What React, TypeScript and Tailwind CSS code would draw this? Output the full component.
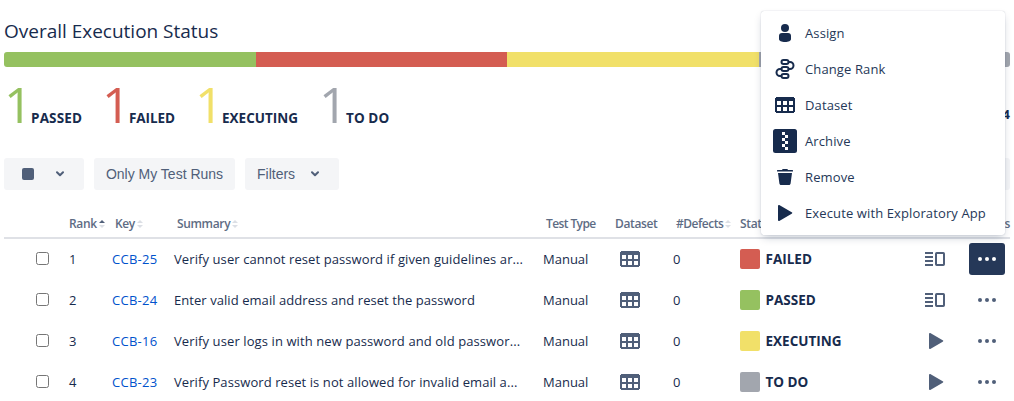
import React from 'react';

type Status = 'FAILED' | 'PASSED' | 'EXECUTING' | 'TO DO';

const fill: Record<Status, string> = {
  PASSED: 'bg-[#95c160]',
  FAILED: 'bg-[#d45d52]',
  EXECUTING: 'bg-[#f1e069]',
  'TO DO': 'bg-[#a2a6ae]',
};

const GRID = 'grid grid-cols-[65px_43px_62px_369px_73px_57px_67px_185px_44px_41px]';

const DatasetIcon = () => (
  <svg width="20" height="16" viewBox="0 0 20 16" shapeRendering="crispEdges">
    <path
      fill="currentColor"
      fillRule="evenodd"
      d="M1 0h18v1h1v14h-1v1H1v-1H0V1h1zM2 4v4h4V4zm6 0v4h4V4zm6 0v4h4V4zM2 10v4h4v-4zm6 0v4h4v-4zm6 0v4h4v-4z"
    />
  </svg>
);

const PlayIcon = () => (
  <svg width="15" height="16" viewBox="0 0 15 16">
    <path fill="currentColor" d="M0 1.3C0 .2.8-.2 1.7.3l12 7c.8.4.8 1 0 1.4l-12 7C.8 16.200 0 15.800 0 14.700z" />
  </svg>
);

const DetailIcon = () => (
  <svg width="20" height="14" viewBox="0 0 20 14">
    <path fill="currentColor" d="M0 0h8v2H0zM0 4h8v2H0zM0 8h8v2H0zM0 12h8v2H0z" />
    <rect x="11" y="1" width="8" height="12" rx=".7" fill="none" stroke="currentColor" strokeWidth="2" />
  </svg>
);

const PersonIcon = () => (
  <svg width="12" height="18" viewBox="0 0 12 18" fill="currentColor">
    <circle cx="6" cy="4" r="4" />
    <path d="M0 12a3 3 0 0 1 3-3h6a3 3 0 0 1 3 3v3c0 2-2.500 3-6 3s-6-1-6-3z" />
  </svg>
);

const RankIcon = () => (
  <svg width="20" height="20" viewBox="0 0 20 20" fill="none" stroke="currentColor" strokeWidth="2">
    <rect x="6.500" y="1" width="7" height="4" rx="2" />
    <rect x="6.500" y="8" width="7" height="4" rx="2" />
    <rect x="6.500" y="15" width="7" height="4" rx="2" />
    <path d="M13.500 3H15a3.500 3.500 0 0 1 0 7h-1.500M6.500 10H5a3.500 3.500 0 0 0 0 7h1.500" />
  </svg>
);

const ArchiveIcon = () => (
  <svg width="24" height="24" viewBox="0 0 24 24">
    <rect width="24" height="24" rx="2.500" fill="currentColor" />
    <path fill="#fff" d="M9 3h3v3H9zM12 6h3v3h-3zM9 9h3v3H9zM12 12h3v3h-3zM9 15h3v3H9zM12 18h3v3h-3z" />
  </svg>
);

const TrashIcon = () => (
  <svg width="16" height="16" viewBox="0 0 16 16" fill="currentColor">
    <path d="M0 2.500V1.600c0-.4.200-.6.600-.6H5c.2-.6.500-1 1-1h4c.5 0 .8.400 1 1h4.400c.4 0 .6.200.6.600v.9zM1 4h14l-1.400 10.500c-.1.900-.8 1.500-1.600 1.500H4c-.8 0-1.500-.6-1.600-1.500z" />
  </svg>
);

const Chevron = () => (
  <svg width="8" height="6" viewBox="0 0 8 6" fill="none" stroke="currentColor" strokeWidth="2" strokeLinecap="round" strokeLinejoin="round">
    <path d="M1 1.200l3 3 3-3" />
  </svg>
);

const Sort = ({ active = false }: { active?: boolean }) => (
  <svg width="6" height="8" viewBox="0 0 6 8" className="ml-0.5">
    <path d="M0 3l3-3 3 3z" fill={active ? '#505f79' : '#dcdfe5'} />
    <path d="M0 5l3 3 3-3z" fill="#dcdfe5" />
  </svg>
);

const Dots = () => (
  <svg width="18" height="4" viewBox="0 0 18 4" fill="currentColor">
    <circle cx="2" cy="2" r="2" />
    <circle cx="9" cy="2" r="2" />
    <circle cx="16" cy="2" r="2" />
  </svg>
);

const counts: { label: Status; color: string; width: string; spacing: string }[] = [
  { label: 'PASSED', color: 'text-[#95c160]', width: 'w-[98px]', spacing: 'tracking-[0.15px]' },
  { label: 'FAILED', color: 'text-[#d45d52]', width: 'w-[93px]', spacing: 'tracking-[-0.1px]' },
  { label: 'EXECUTING', color: 'text-[#f1e069]', width: 'w-[124px]', spacing: 'tracking-[0.02px]' },
  { label: 'TO DO', color: 'text-[#a2a6ae]', width: 'w-[100px]', spacing: 'tracking-[0.1px]' },
];

const rows: { key: string; summary: string; status: Status; done: boolean; spacing: string }[] = [
  { key: 'CCB-25', summary: 'Verify user cannot reset password if given guidelines ar...', status: 'FAILED', done: true, spacing: 'tracking-[0.09px]' },
  { key: 'CCB-24', summary: 'Enter valid email address and reset the password', status: 'PASSED', done: true, spacing: 'tracking-[0.06px]' },
  { key: 'CCB-16', summary: 'Verify user logs in with new password and old passwor...', status: 'EXECUTING', done: false, spacing: 'tracking-[0.1px]' },
  { key: 'CCB-23', summary: 'Verify Password reset is not allowed for invalid email a...', status: 'TO DO', done: false, spacing: 'tracking-[0.08px]' },
];

const menu: { label: string; icon: React.ReactNode }[] = [
  { label: 'Assign', icon: <PersonIcon /> },
  { label: 'Change Rank', icon: <RankIcon /> },
  { label: 'Dataset', icon: <DatasetIcon /> },
  { label: 'Archive', icon: <ArchiveIcon /> },
  { label: 'Remove', icon: <TrashIcon /> },
  { label: 'Execute with Exploratory App', icon: <PlayIcon /> },
];

export default function App() {
  return (
    <div className="relative h-[401px] w-[1014px] overflow-hidden bg-white px-1 font-['Open_Sans',sans-serif] text-[13px] text-[#172b4d]">
      <h1 className="flex h-[52px] items-center pt-[11px] text-[19px] font-medium tracking-[-0.01px] whitespace-nowrap">
        Overall Execution Status
      </h1>
      <div className="flex h-[15px] w-[1006px] overflow-hidden rounded-[3px]">
        <div className="w-[252px] bg-[#95c160]" />
        <div className="w-[251px] bg-[#d45d52]" />
        <div className="w-[252px] bg-[#f1e069]" />
        <div className="flex-1 bg-[#a2a6ae]" />
      </div>

      <div className="flex h-[91px] items-start pt-[9px] whitespace-nowrap">
        {counts.map((c) => (
          <div key={c.label} className={`flex items-baseline leading-[56px] ${c.width}`}>
            <span className={`w-[27px] text-[50px] font-normal ${c.color}`}>1</span>
            <span className={`text-[13.5px] font-bold ${c.spacing}`}>{c.label}</span>
          </div>
        ))}
        <span className="ml-auto pt-[29px] text-[13px] leading-[18px] font-bold">4</span>
      </div>

      <div className="flex h-8 gap-2.5 font-['Liberation_Sans',sans-serif] text-[14px] text-[#505f79]">
        <button className="flex w-20 items-center rounded-[3px] bg-[#f4f5f7] pl-[18px]">
          <span className="h-3 w-3 rounded-[2px] bg-[#505f79]" />
          <span className="ml-[22px]"><Chevron /></span>
        </button>
        <button className="w-[141px] rounded-[3px] bg-[#f4f5f7] whitespace-nowrap">Only My Test Runs</button>
        <button className="flex w-[94px] items-center rounded-[3px] bg-[#f4f5f7] pl-3">
          Filters
          <span className="ml-4"><Chevron /></span>
        </button>
        <div className="ml-auto w-24 rounded-[3px] bg-[#f4f5f7]" />
      </div>

      <div className={`${GRID} mt-[18px] h-[31px] w-[1006px] items-center border-b-2 border-[#dfe1e6] pt-[2px] text-[12px] font-semibold tracking-[-0.35px] whitespace-nowrap text-[#5e6c84]`}>
        <span />
        <span className="flex items-center">Rank<Sort active /></span>
        <span className="ml-[3px] flex items-center">Key<Sort /></span>
        <span className="ml-[3px] flex items-center">Summary<Sort /></span>
        <span className="ml-[3px] tracking-[-0.6px]">Test Type</span>
        <span className="-ml-px">Dataset</span>
        <span className="ml-[3px] flex items-center tracking-[-0.5px]">#Defects<Sort /></span>
        <span>Status</span>
        <span />
        <span className="justify-self-end">Actions</span>
      </div>

      {rows.map((r, i) => (
        <div key={r.key} className={`${GRID} h-[41px] w-[1006px] items-center pb-px whitespace-nowrap`}>
          <span className="mb-px ml-8 h-[13px] w-[13px] rounded-[2.5px] border border-[#767676]" />
          <span className="pt-[1.5px]">{i + 1}</span>
          <a className="pt-[1.5px] tracking-[0.25px] text-[#0052cc]">{r.key}</a>
          <span className={`pt-[1.5px] ${r.spacing}`}>{r.summary}</span>
          <span className="pt-[1.5px]">Manual</span>
          <span className="ml-1 text-[#505f79]"><DatasetIcon /></span>
          <span className="pt-[1.5px]">0</span>
          <span className="flex items-center">
            <span className={`mr-[5.5px] h-5 w-5 rounded-[2px] ${fill[r.status]}`} />
            <span className="text-[13.5px] font-bold">{r.status}</span>
          </span>
          <span className="text-[#505f79]">
            {r.done ? <DetailIcon /> : <span className="ml-1 block"><PlayIcon /></span>}
          </span>
          <button className={`flex h-8 w-9 items-center justify-center rounded-[3px] ${i === 0 ? 'bg-[#253858] text-white' : 'text-[#505f79]'}`}>
            <Dots />
          </button>
        </div>
      ))}

      <div className="absolute top-[11px] left-[761px] h-[224px] w-[244px] rounded-[3px] bg-white py-1 shadow-[0_4px_8px_-2px_rgba(9,30,66,0.25),0_0_1px_rgba(9,30,66,0.31)]">
        {menu.map((m) => (
          <div key={m.label} className="flex h-9 items-center whitespace-nowrap">
            <span className="ml-3 flex w-6 justify-center">{m.icon}</span>
            <span className="ml-2 pt-[2px] tracking-[0.12px] text-[#253858]">{m.label}</span>
          </div>
        ))}
      </div>
    </div>
  );
}
